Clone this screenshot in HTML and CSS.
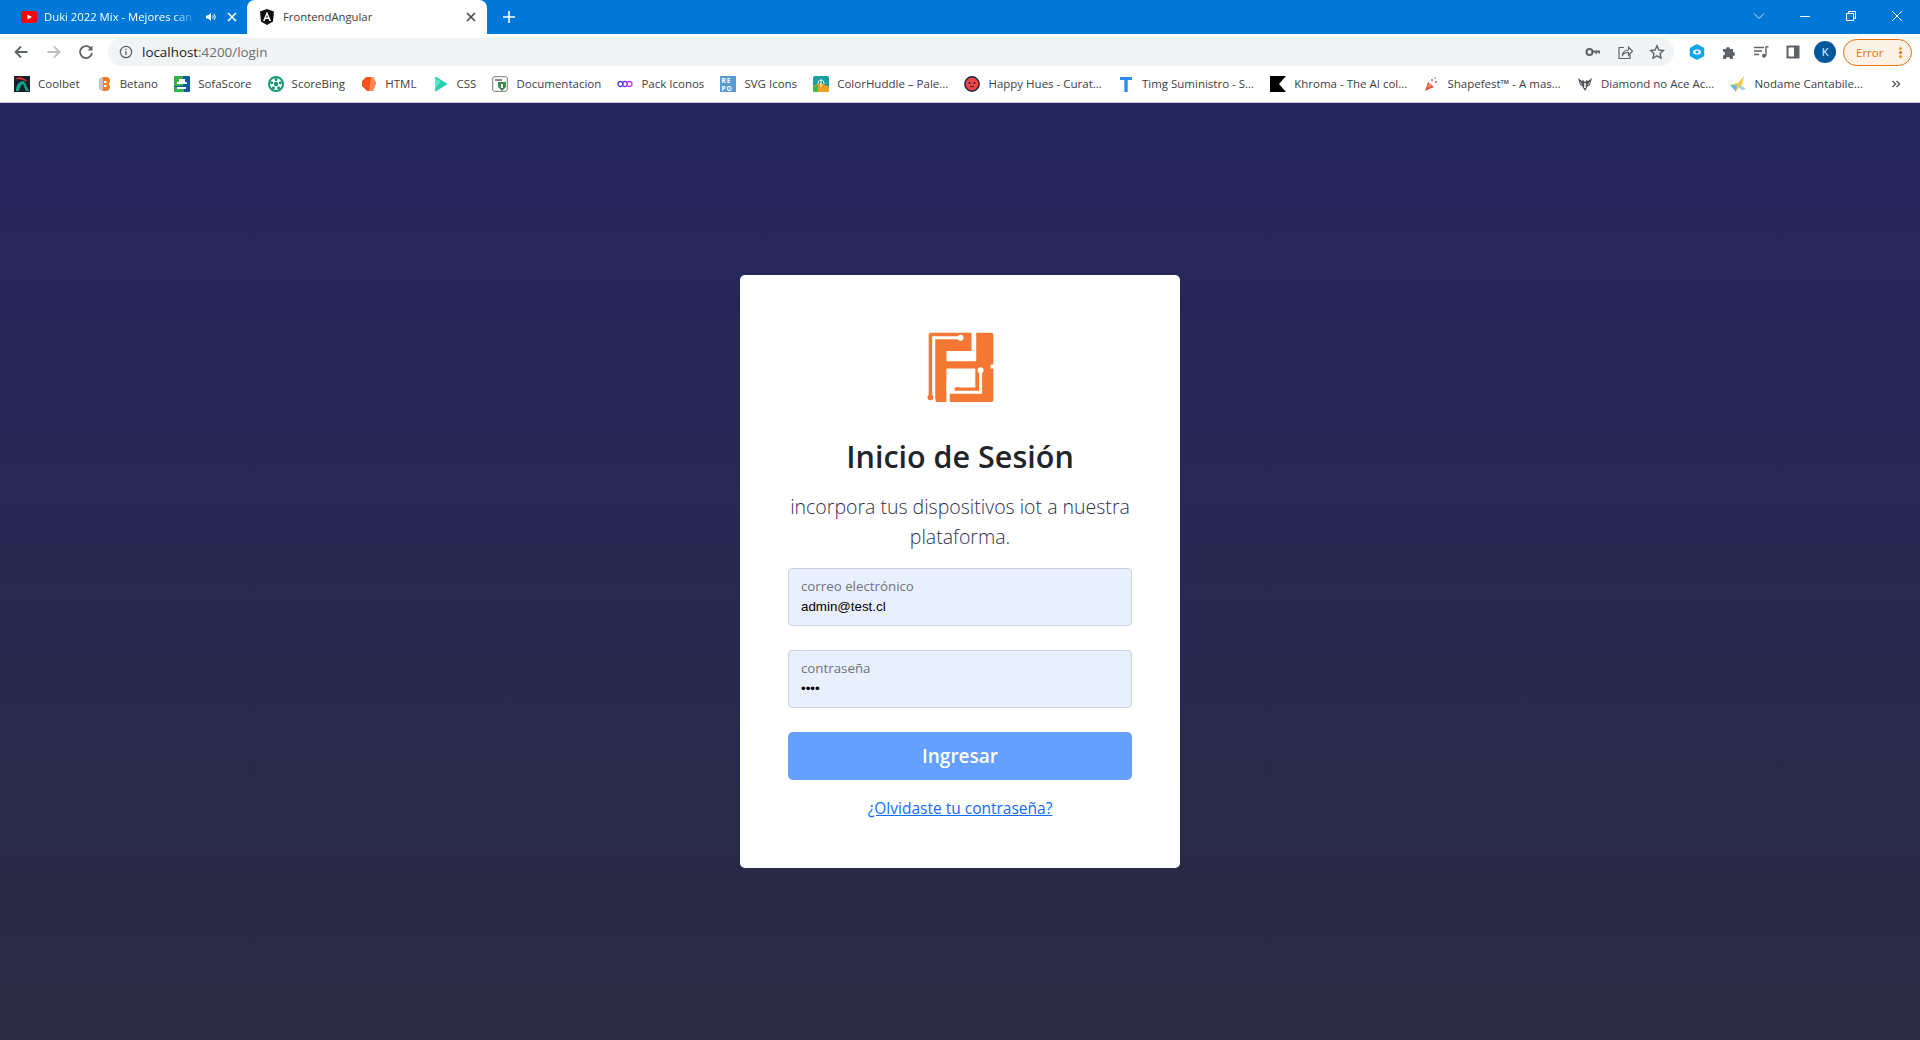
FILE: index.html
```html
<!DOCTYPE html>
<html lang="es">
<head>
<meta charset="utf-8">
<title>FrontendAngular</title>
<link rel="stylesheet" href="styles.css">
</head>
<body>
<header class="chrome">
  <div class="titlebar">
    <div class="tab">
      <svg class="fav" viewBox="0 0 16 16"><rect y="2" width="16" height="12" rx="3" fill="#f00"/><path d="M6.400 5.400v5.200L11 8z" fill="#fff"/></svg>
      <span class="tab-title tab-fade">Duki 2022 Mix - Mejores can</span>
      <svg class="tab-audio" viewBox="0 0 12 12"><path d="M1 4.500h2L6 2v8L3 7.500H1z" fill="#fff"/><path d="M7.500 4.500a2 2 0 0 1 0 3M9 3a4.500 4.500 0 0 1 0 6" fill="none" stroke="#fff"/></svg>
      <svg class="tab-close" viewBox="0 0 10 10"><path d="M1 1l8 8M9 1l-8 8" stroke="#fff" stroke-width="1.600"/></svg>
    </div>
    <div class="tab tab-active">
      <svg class="fav" viewBox="0 0 16 16"><path d="M8 0L1 2.500l1 10L8 16l6-3.500 1-10z" fill="#111"/><path d="M8 2.500L4 12h1.600l.8-2h3.200l.8 2H12zM7 8.600L8 6l1 2.600z" fill="#fff"/></svg>
      <span class="tab-title">FrontendAngular</span>
      <svg class="tab-close" viewBox="0 0 10 10"><path d="M1 1l8 8M9 1l-8 8" stroke="#444" stroke-width="1.600"/></svg>
    </div>
    <svg class="newtab" viewBox="0 0 12 12"><path d="M6 0v12M0 6h12" stroke="#fff" stroke-width="1.600"/></svg>
    <div class="winctl">
      <svg viewBox="0 0 12 12"><path d="M1 3.500l5 5 5-5" fill="none" stroke="#cfe4f7"/></svg>
      <svg viewBox="0 0 12 12"><path d="M1 6.500h10" stroke="#fff"/></svg>
      <svg viewBox="0 0 12 12"><path d="M1.500 3.500h7v7h-7zM3.500 3.500v-2h7v7h-2" fill="none" stroke="#fff"/></svg>
      <svg viewBox="0 0 12 12"><path d="M1 1l10 10M11 1L1 11" stroke="#fff"/></svg>
    </div>
  </div>
  <div class="toolbar">
    <div class="navs">
      <svg viewBox="0 0 16 16"><path d="M14.500 8H2.500M8 2.500L2.500 8 8 13.500" fill="none" stroke="#5f6368" stroke-width="1.800"/></svg>
      <svg viewBox="0 0 16 16"><path d="M1.500 8h12M8 2.500L13.500 8 8 13.500" fill="none" stroke="#b9bcc0" stroke-width="1.800"/></svg>
      <svg viewBox="0 0 16 16"><path d="M13.500 5.500A6 6 0 1 0 14 9" fill="none" stroke="#5f6368" stroke-width="1.800"/><path d="M14.500 1.500v5h-5z" fill="#5f6368"/></svg>
    </div>
    <div class="omnibox">
      <svg class="info" viewBox="0 0 16 16"><circle cx="8" cy="8" r="6.500" fill="none" stroke="#5f6368" stroke-width="1.400"/><path d="M8 7v4.500M8 4.300v1.500" stroke="#5f6368" stroke-width="1.500"/></svg>
      <span class="url"><span class="url-host">localhost</span>:4200/login</span>
      <div class="omni-actions">
        <svg viewBox="0 0 16 16"><circle cx="4.500" cy="8" r="3" fill="none" stroke="#5f6368" stroke-width="2"/><path d="M7 6.500h8v3h-1.500V8.500H12v1.500h-1.500V8.500H7z" fill="#5f6368"/></svg>
        <svg viewBox="0 0 16 16"><path d="M7 3.500H2v11h11v-4" fill="none" stroke="#5f6368" stroke-width="1.200"/><path d="M5.500 11c.5-3.500 3-5 6-5V3.200l4 4-4 4V8.500c-2.500-.2-4.500.7-6 2.500z" fill="none" stroke="#5f6368" stroke-width="1.200"/></svg>
        <svg viewBox="0 0 16 16"><path d="M8 1.800l1.900 4.200 4.600.5-3.400 3.100.9 4.500L8 11.800l-4 2.300.9-4.500-3.400-3.100 4.600-.5z" fill="none" stroke="#5f6368" stroke-width="1.400"/></svg>
      </div>
    </div>
    <div class="extensions">
      <svg viewBox="0 0 16 16"><path d="M8 1l6.500 3.500v7L8 15l-6.500-3.500v-7z" fill="#12a5ec" stroke="#12a5ec" stroke-width="1.500" stroke-linejoin="round"/><ellipse cx="8" cy="8" rx="4" ry="2.600" fill="#fff"/><circle cx="8" cy="8" r="1.500" fill="#12a5ec"/></svg>
      <svg viewBox="0 0 16 16"><path d="M2 5h3a2 2 0 1 1 4 0h3v3a2 2 0 1 1 0 4v3H9a2 2 0 1 0-4 0H2v-3.500a2 2 0 1 0 0-4z" fill="#5f6368"/></svg>
      <svg viewBox="0 0 16 16"><path d="M1 3.500h10M1 7h8M1 10.500h5M13 3v8.500" fill="none" stroke="#5f6368" stroke-width="1.400"/><circle cx="11" cy="11.700" r="2" fill="#5f6368"/><path d="M12.500 2.800h3" stroke="#5f6368" stroke-width="1.400"/></svg>
      <svg viewBox="0 0 16 16"><path d="M2.500 2.500h11v11h-11z" fill="none" stroke="#5f6368" stroke-width="2"/><path d="M9 2.500h4.500v11H9z" fill="#5f6368"/></svg>
      <span class="avatar">K</span>
    </div>
    <div class="error-pill"><span>Error</span><span class="dots"></span></div>
  </div>
  <nav class="bookmarks">
    <a class="bm"><svg viewBox="0 0 16 16"><rect width="16" height="16" fill="#13222a"/><path d="M2 15C2 9 5 5 10 5l5 10h-3L9 8c-2 1-3 3-4 7z" fill="#15a38f"/><path d="M1 3c4-3 9-2 13 3-4-2-8-3-13-3z" fill="#d8342c"/></svg><span>Coolbet</span></a>
    <a class="bm"><svg viewBox="0 0 16 16"><path d="M3 4C3 2 5 1 7 1v14c-2 0-4-1-4-3z" fill="#c4c4c4"/><path d="M7 1h3c3 0 4 2 4 4 0 1-.5 2-1.500 3 1 1 1.500 2 1.500 3 0 2-1.500 4-4 4H7z" fill="#f47a20"/><path d="M8 5h2.500v2H8zM8 9h2.500v2H8z" fill="#fff"/></svg><span>Betano</span></a>
    <a class="bm"><svg viewBox="0 0 16 16"><rect width="16" height="16" rx="1" fill="#0b5aa6"/><path d="M0 0h9v10H0z" fill="#36b34a"/><path d="M3 6h10v2H3zM5 3h6v3H5z" fill="#fff"/><path d="M0 11h10v5H0z" fill="#36b34a"/><path d="M3 11h9v2H3z" fill="#fff"/></svg><span>SofaScore</span></a>
    <a class="bm"><svg viewBox="0 0 16 16"><circle cx="8" cy="8" r="7" fill="#fff" stroke="#139a6c" stroke-width="2"/><circle cx="8" cy="8" r="2.200" fill="#139a6c"/><circle cx="8" cy="3.500" r="1.500" fill="#139a6c"/><circle cx="12.300" cy="6.700" r="1.500" fill="#139a6c"/><circle cx="10.600" cy="11.800" r="1.500" fill="#139a6c"/><circle cx="5.400" cy="11.800" r="1.500" fill="#139a6c"/><circle cx="3.700" cy="6.700" r="1.500" fill="#139a6c"/></svg><span>ScoreBing</span></a>
    <a class="bm"><svg viewBox="0 0 16 16"><path d="M5 1h7l3 6-3 8H6L1 10V5z" fill="#f4511e"/><path d="M10 1h2l3 6-3 8H8z" fill="#ff8a50"/></svg><span>HTML</span></a>
    <a class="bm"><svg viewBox="0 0 16 16"><path d="M3 2a1 1 0 0 1 1.500-1L14 7a1 1 0 0 1 0 2L4.500 15A1 1 0 0 1 3 14z" fill="#24d0b0"/><path d="M3 2l6 3.500L3 13z" fill="#5ee6cd"/></svg><span>CSS</span></a>
    <a class="bm"><svg viewBox="0 0 16 16"><rect x=".7" y=".7" width="14.600" height="14.600" rx="2" fill="#fff" stroke="#777"/><path d="M3 3h7v2H3z" fill="#888"/><path d="M6 6h8v5l-4 4-4-4z" fill="#3a8f4e"/><path d="M9 8h2v4H9z" fill="#fff"/></svg><span>Documentacion</span></a>
    <a class="bm"><svg viewBox="0 0 16 16"><circle cx="3.500" cy="8" r="2.500" fill="none" stroke="#4a3cf0" stroke-width="1.300"/><circle cx="8" cy="8" r="2.500" fill="none" stroke="#7a3cf0" stroke-width="1.300"/><circle cx="12.500" cy="8" r="2.500" fill="none" stroke="#c23cf0" stroke-width="1.300"/></svg><span>Pack Iconos</span></a>
    <a class="bm"><svg viewBox="0 0 16 16"><rect width="16" height="16" fill="#5b9bd5"/><text class="repo" x="1.500" y="7">RE</text><text class="repo" x="1.500" y="14.500">PO</text></svg><span>SVG Icons</span></a>
    <a class="bm"><svg viewBox="0 0 16 16"><rect width="16" height="16" rx="2" fill="#1ea0a0"/><path d="M0 10l8-3 8 4v3a2 2 0 0 1-2 2H2a2 2 0 0 1-2-2z" fill="#f0a020"/><path d="M0 11l5-2v7H2a2 2 0 0 1-2-2z" fill="#43b649"/><path d="M5 8c0-3 1-4 3-4s3 1 3 4M8 4v7" fill="none" stroke="#fff"/></svg><span>ColorHuddle – Pale...</span></a>
    <a class="bm"><svg viewBox="0 0 16 16"><circle cx="8" cy="8" r="7.200" fill="#ef4545" stroke="#20203a" stroke-width="1.400"/><circle cx="5.500" cy="7" r="1" fill="#20203a"/><circle cx="10.500" cy="7" r="1" fill="#20203a"/><path d="M6 10c1 1 3 1 4 0" fill="none" stroke="#20203a"/></svg><span>Happy Hues - Curat...</span></a>
    <a class="bm"><svg viewBox="0 0 16 16"><path d="M2 1h12v3H9.700v12H6.300V4H2z" fill="#2b8cf2"/></svg><span>Timg Suministro - S...</span></a>
    <a class="bm"><svg viewBox="0 0 16 16"><path d="M0 0h16L9 8l7 8H0z" fill="#000"/></svg><span>Khroma - The AI col...</span></a>
    <a class="bm"><svg viewBox="0 0 16 16"><path d="M2 15l3-9 6 5z" fill="#e2503c"/><path d="M4 12l2-5 3 3z" fill="#f28a5c"/><circle cx="9" cy="4" r="1" fill="#d13cd0"/><circle cx="12" cy="2" r=".8" fill="#3c7fd1"/><circle cx="13" cy="6" r="1" fill="#e2503c"/></svg><span>Shapefest™ - A mas...</span></a>
    <a class="bm"><svg viewBox="0 0 16 16"><path d="M1 2l4 3 1-1 2 2 2-2 1 1 4-3-2 7-2 1-3 5-3-5-2-1z" fill="#55555f"/><path d="M7 7h2v5H7z" fill="#ddd"/><path d="M3 6l2 3M13 6l-2 3" stroke="#ddd" stroke-width=".8"/></svg><span>Diamond no Ace Ac...</span></a>
    <a class="bm"><svg viewBox="0 0 16 16"><path d="M0 9l8-2 6-7-2 9-6 6 1-6z" fill="#f6cb3a"/><path d="M0 9l7 0-1 7z" fill="#6ab7e8"/><path d="M8 7l3 7 5-1-6-4z" fill="#8fd0f4"/></svg><span>Nodame Cantabile...</span></a>
    <svg class="more" viewBox="0 0 10 10"><path d="M1.500 2l3 3-3 3M5.500 2l3 3-3 3" fill="none" stroke="#5f6368" stroke-width="1.500"/></svg>
  </nav>
</header>
<main class="page">
  <form class="card">
    <svg class="logo" viewBox="0 0 200 215">
      <rect x="5" y="5" width="193" height="207" rx="6" fill="#f47834"/>
      <rect x="133" y="0" width="14" height="60" fill="#fff"/>
      <rect x="58" y="60" width="89" height="30" rx="3" fill="#fff"/>
      <rect x="58" y="112" width="87" height="70" rx="3" fill="#fff"/>
      <rect x="58" y="150" width="10" height="65" fill="#fff"/>
      <path d="M90 174H150V115" fill="none" stroke="#f47834" stroke-width="10"/>
      <circle cx="90" cy="175" r="8" fill="#f47834"/>
      <path d="M160 117V183H60" fill="none" stroke="#fff" stroke-width="9"/>
      <circle cx="160" cy="117" r="9" fill="#fff"/>
      <path d="M100 20H20V215" fill="none" stroke="#fff" stroke-width="9"/>
      <circle cx="100" cy="20" r="9" fill="#fff"/>
      <rect x="0" y="205" width="26" height="10" fill="#fff"/>
      <circle cx="10" cy="198" r="8.500" fill="#f47834"/>
      <path d="M190 100h10v12h-10z" fill="#fff"/>
    </svg>
    <h1 class="title">Inicio de Sesión</h1>
    <p class="subtitle">incorpora tus dispositivos iot a nuestra plataforma.</p>
    <label class="field">
      <span class="field-label">correo electrónico</span>
      <input class="field-input" type="email" value="admin@test.cl">
    </label>
    <label class="field">
      <span class="field-label">contraseña</span>
      <input class="field-input" type="password" value="1234">
    </label>
    <button class="submit" type="button">Ingresar</button>
    <a class="forgot" href="#">¿Olvidaste tu contraseña?</a>
  </form>
</main>
</body>
</html>
```

FILE: styles.css
```css
* { box-sizing: border-box; }
html, body { margin: 0; height: 100%; }
body {
  display: flex;
  flex-direction: column;
  height: 1040px;
  overflow: hidden;
  font-family: "Open Sans", "Liberation Sans", sans-serif;
}
svg { display: block; flex: none; }

/* browser frame */
.chrome { flex: none; background: #fff; border-bottom: 1px solid #d0d1d4; }
.titlebar { display: flex; align-items: center; height: 34px; background: #0078d7; }
.tab {
  display: flex;
  align-items: center;
  align-self: stretch;
  width: 247px;
  padding: 0 10px 1px 21px;
  color: #fff;
  font-size: 11.300px;
}
.tab-active {
  width: 240px;
  padding: 0 11px 1px 12px;
  background: #fff;
  color: #3c4043;
  border-radius: 8px 8px 0 0;
}
.tab-active .fav { margin-right: 8px; }
.fav { width: 16px; height: 16px; margin-right: 7px; }
.tab-title { flex: 1; min-width: 0; white-space: nowrap; }
.tab-fade {
  overflow: hidden;
  -webkit-mask-image: linear-gradient(90deg, #000 85%, transparent);
  mask-image: linear-gradient(90deg, #000 85%, transparent);
}
.tab-audio { width: 12px; height: 12px; margin: 0 10px 0 8px; }
.tab-close { width: 10px; height: 10px; }
.newtab { width: 12px; height: 12px; margin-left: 16px; }
.winctl { display: flex; gap: 34px; margin-left: auto; padding-right: 17px; }
.winctl svg { width: 12px; height: 12px; margin-bottom: 3px; }

.toolbar { display: flex; align-items: center; height: 32px; padding-top: 4px; }
.navs { display: flex; gap: 16.500px; padding-left: 13px; width: 108px; }
.navs svg { width: 16px; height: 16px; }
.omnibox {
  display: flex;
  align-items: center;
  width: 1566px;
  height: 28px;
  padding: 0 9px 0 11px;
  background: #f1f3f4;
  border-radius: 14px;
}
.info { width: 14px; height: 14px; margin-right: 9px; }
.url { font-size: 13.400px; color: #6a6e72; }
.url-host { color: #202124; }
.omni-actions { display: flex; gap: 16px; margin-left: auto; }
.omni-actions svg { width: 16px; height: 16px; }
.extensions { display: flex; align-items: center; gap: 16px; margin-left: 15px; }
.extensions svg { width: 16px; height: 16px; }
.avatar {
  width: 22px;
  height: 22px;
  margin-left: -3px;
  border-radius: 50%;
  background: #01579b;
  color: #fff;
  font-size: 11px;
  line-height: 22px;
  text-align: center;
}
.error-pill {
  display: flex;
  align-items: center;
  justify-content: space-between;
  width: 69px;
  height: 27px;
  margin-left: 7px;
  padding: 0 9px 0 12px;
  border: 1px solid #e8710a;
  border-radius: 14px;
  background: #fdf2e8;
  color: #e8710a;
  font-size: 11.500px;
}
.dots {
  width: 3px;
  height: 3px;
  border-radius: 50%;
  background: #e8710a;
  box-shadow: 0 -4px 0 #f29900, 0 4px 0 #f29900;
}

.bookmarks { display: flex; align-items: center; height: 36px; padding-left: 14px; gap: 16.100px; }
.bm {
  display: flex;
  align-items: center;
  gap: 8px;
  font-size: 11.500px;
  color: #3c4043;
  white-space: nowrap;
}
.bm svg { width: 16px; height: 16px; }
.bm span { max-width: 116px; padding-bottom: 2px; }
.repo { font-size: 6.500px; font-weight: 700; fill: #fff; letter-spacing: 1px; }
.more { width: 10px; height: 10px; margin-left: 12px; }

/* login page */
.page {
  flex: 1;
  display: flex;
  align-items: center;
  justify-content: center;
  background: linear-gradient(180deg, #25265f 0%, #2a2a42 100%);
}
.card {
  display: flex;
  flex-direction: column;
  align-items: center;
  width: 440px;
  height: 593px;
  padding: 56px 48px 0;
  background: #fff;
  border-radius: 5px;
}
.logo { width: 67px; height: 72px; }
.title {
  margin: 33px 0 0;
  font-size: 30.500px;
  line-height: 40px;
  font-weight: 600;
  color: #212529;
  white-space: nowrap;
}
.subtitle {
  margin: 16px 0 0;
  font-size: 19.500px;
  line-height: 30px;
  font-weight: 300;
  color: #2f3050;
  text-align: center;
}
.field {
  display: block;
  width: 344px;
  height: 58px;
  margin-bottom: 24px;
  padding: 8px 12px 0;
  background: #e8f0fe;
  border: 1px solid #ced4da;
  border-radius: 4px;
}
.subtitle + .field { margin-top: 16px; }
.field-label { display: block; font-size: 13.300px; line-height: 18px; color: #6c757d; }
.field-input {
  display: block;
  width: 100%;
  margin-top: 2px;
  padding: 0;
  border: 0;
  outline: 0;
  background: transparent;
  font-family: "Liberation Sans", Arial, sans-serif;
  font-size: 13.330px;
  line-height: 20px;
  color: #000;
}
.submit {
  width: 344px;
  height: 48px;
  border: 0;
  border-radius: 5px;
  background: #64a1ff;
  color: #fff;
  font-family: inherit;
  font-size: 19px;
  font-weight: 600;
}
.forgot { margin-top: 16px; font-size: 15.500px; line-height: 24px; color: #0d6efd; }
```
